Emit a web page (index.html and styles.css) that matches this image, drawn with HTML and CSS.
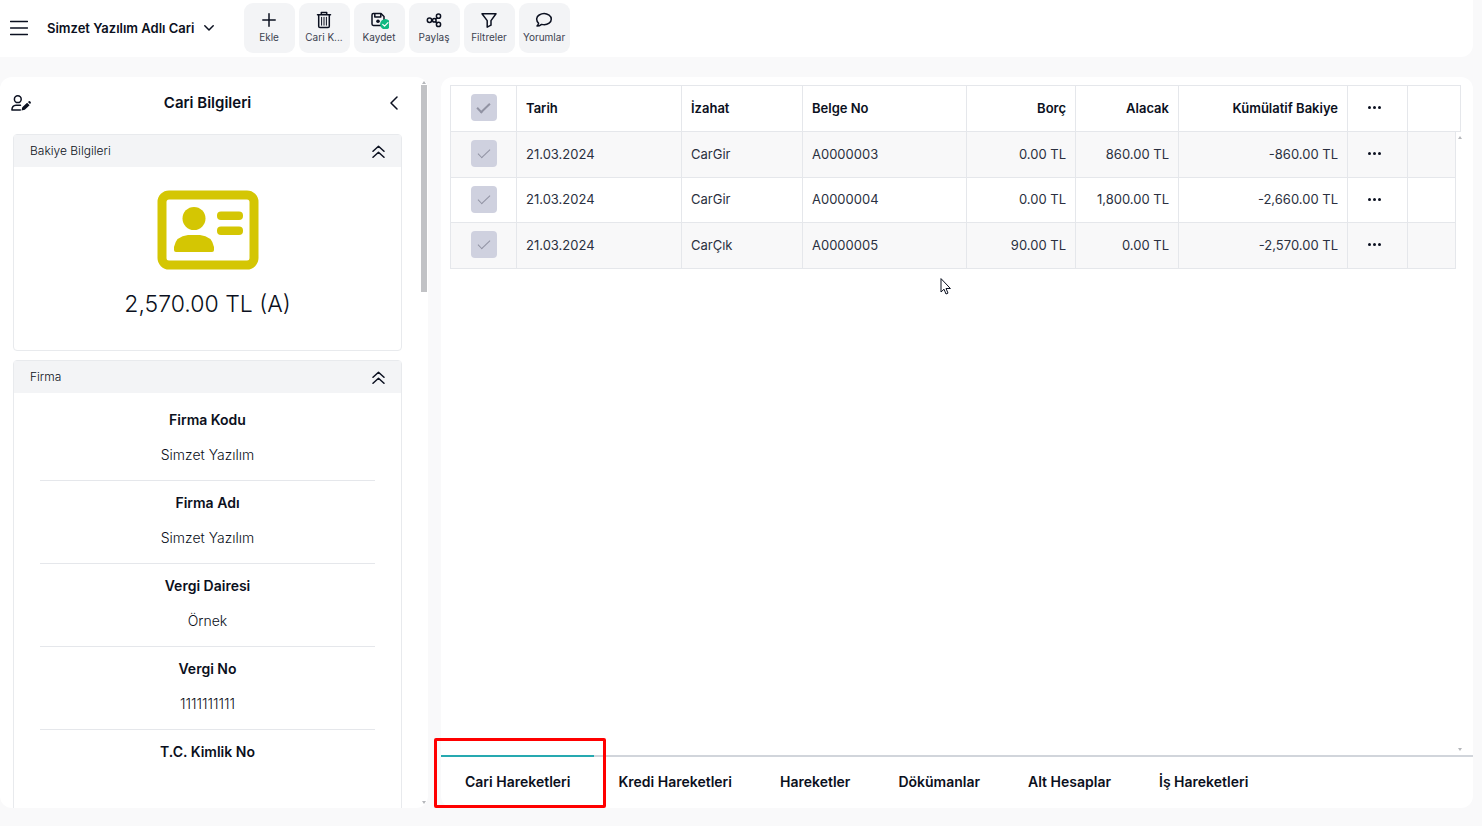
FILE: index.html
```html
<!DOCTYPE html>
<html lang="tr">
<head>
  <meta charset="UTF-8">
  <meta name="viewport" content="width=device-width, initial-scale=1.0">
  <title>Cari Hareketleri</title>
  <link rel="stylesheet" href="styles.css">
</head>
<body>

<header class="topbar">
  <button class="icon-btn menu-btn" aria-label="Menü">
    <svg width="18" height="16" viewBox="0 0 18 16"><path d="M0.5 1.5h17M0.5 8h17M0.5 14.5h17"/></svg>
  </button>
  <button class="title-btn">
    Simzet Yazılım Adlı Cari
    <svg width="10" height="6" viewBox="0 0 10 6"><path d="M0.8 0.8L5 5l4.2-4.2"/></svg>
  </button>

  <nav class="toolbar">
    <button class="tool">
      <svg width="18" height="18" viewBox="0 0 18 18"><path d="M9 2.8v12.4M2.8 9h12.4"/></svg>
      <span>Ekle</span>
    </button>
    <button class="tool">
      <svg width="18" height="18" viewBox="0 0 18 18"><path d="M2.500 3.700h13M6.300 3.500V1.500h5.400v2M3.700 4v11.200q0 1.300 1.300 1.300h8q1.300 0 1.300-1.300V4"/><path class="thin" d="M6.600 6.300v7.900M9 6.300v7.900M11.400 6.300v7.900"/></svg>
      <span>Cari K...</span>
    </button>
    <button class="tool">
      <svg width="20" height="18" viewBox="0 0 20 18"><path d="M12 14.500H4.400Q3 14.500 3 13.100V3.900Q3 2.500 4.400 2.500h7.600l3 3v4"/><path d="M5.800 2.700v3.200h6V2.700"/><circle class="fill" cx="9" cy="10.200" r="1.800"/><circle class="badge" cx="16.300" cy="13.300" r="5.200"/><path class="badge-tick" d="M13.700 13.300l1.900 1.900 3.400-3.500"/></svg>
      <span>Kaydet</span>
    </button>
    <button class="tool">
      <svg width="18" height="18" viewBox="0 0 18 18"><circle cx="4.500" cy="9.300" r="2.200"/><circle cx="9.300" cy="9.300" r="1.800"/><circle cx="13.500" cy="5.200" r="2.100"/><circle cx="13.500" cy="13.400" r="2.100"/><path d="M10.600 8l1.300-1.300M10.600 10.600l1.300 1.300"/></svg>
      <span>Paylaş</span>
    </button>
    <button class="tool">
      <svg width="18" height="18" viewBox="0 0 18 18"><path d="M2 2.800h14L11 9.600v4.600l-3.800 2V9.600z"/></svg>
      <span>Filtreler</span>
    </button>
    <button class="tool">
      <svg width="18" height="18" viewBox="0 0 18 18"><path d="M3.600 12.300C0.600 9.200 1.400 5.700 4.200 4c3-1.800 7.200-1.700 9.900.2 2.900 2.100 2.900 5.800 0 8-2 1.500-5 2-7.500 1.200-1.300 1-2.700 1.700-4.600 1.700.9-.9 1.500-1.800 1.600-2.800z"/></svg>
      <span>Yorumlar</span>
    </button>
  </nav>
</header>

<div class="layout">

  <aside class="sidebar">
    <div class="side-content">
      <div class="side-head">
        <button class="icon-btn" aria-label="Düzenle">
          <svg width="20" height="16" viewBox="0 0 20 16"><circle cx="6.800" cy="4.200" r="3.400"/><path d="M9.500 10.300H5Q1 10.600 0.900 15H9.300"/><path class="fill" d="M10.500 15.500l.8-3.300 4.800-4.500 2.500 2.500-4.800 4.500zM16.900 7l1-.8q.8-.4 1.400.2l.4.500q.500.800-.2 1.500l-.5.600z"/></svg>
        </button>
        <h2>Cari Bilgileri</h2>
        <button class="icon-btn" aria-label="Kapat">
          <svg width="8" height="14" viewBox="0 0 8 14"><path d="M7 1L1 7l6 6"/></svg>
        </button>
      </div>

      <section class="card">
        <div class="card-head">
          <h3>Bakiye Bilgileri</h3>
          <button class="icon-btn" aria-label="Daralt">
            <svg width="13" height="13" viewBox="0 0 13 13"><path d="M1 6.300l5.500-5 5.500 5M1 12.200l5.500-5 5.500 5"/></svg>
          </button>
        </div>
        <div class="balance">
          <svg width="102" height="80" viewBox="0 0 102 80">
            <rect class="frame" x="5" y="5" width="92" height="70" rx="7"/>
            <circle cx="37" cy="28.500" r="11.500"/>
            <path d="M17 60V57Q19 46 31 45h12q12 1 14 12v3q0 2-2 2H19q-2 0-2-2z"/>
            <rect x="60" y="21.500" width="26" height="8.500" rx="4"/>
            <rect x="60" y="36.500" width="26" height="8.500" rx="4"/>
          </svg>
          <p>2,570.00 TL (A)</p>
        </div>
      </section>

      <section class="card">
        <div class="card-head">
          <h3>Firma</h3>
          <button class="icon-btn" aria-label="Daralt">
            <svg width="13" height="13" viewBox="0 0 13 13"><path d="M1 6.300l5.500-5 5.500 5M1 12.200l5.500-5 5.500 5"/></svg>
          </button>
        </div>
        <dl class="fields">
          <div><dt>Firma Kodu</dt><dd>Simzet Yazılım</dd></div>
          <div><dt>Firma Adı</dt><dd>Simzet Yazılım</dd></div>
          <div><dt>Vergi Dairesi</dt><dd>Örnek</dd></div>
          <div><dt>Vergi No</dt><dd>1111111111</dd></div>
          <div><dt>T.C. Kimlik No</dt><dd></dd></div>
        </dl>
      </section>
    </div>

    <div class="scrollbar">
      <span class="arrow-up"></span>
      <span class="thumb"></span>
      <span class="arrow-down"></span>
    </div>
  </aside>

  <main class="panel">
    <div class="grid-area">
      <table class="grid">
        <colgroup>
          <col class="c-check"><col class="c-date"><col class="c-desc"><col class="c-doc"><col class="c-debit"><col class="c-credit"><col class="c-total"><col class="c-more"><col>
        </colgroup>
        <thead>
          <tr>
            <th><input type="checkbox" aria-label="Tümünü seç"></th>
            <th>Tarih</th>
            <th>İzahat</th>
            <th>Belge No</th>
            <th class="num">Borç</th>
            <th class="num">Alacak</th>
            <th class="num">Kümülatif Bakiye</th>
            <th><button class="more" aria-label="Seçenekler"><i></i><i></i><i></i></button></th>
            <th></th>
          </tr>
        </thead>
      </table>

      <div class="grid-scroll">
        <table class="grid">
          <colgroup>
            <col class="c-check"><col class="c-date"><col class="c-desc"><col class="c-doc"><col class="c-debit"><col class="c-credit"><col class="c-total"><col class="c-more"><col>
          </colgroup>
          <tbody>
            <tr>
              <td><input type="checkbox" aria-label="A0000003"></td>
              <td>21.03.2024</td>
              <td>CarGir</td>
              <td>A0000003</td>
              <td class="num">0.00 TL</td>
              <td class="num">860.00 TL</td>
              <td class="num">-860.00 TL</td>
              <td><button class="more" aria-label="Seçenekler"><i></i><i></i><i></i></button></td>
              <td></td>
            </tr>
            <tr>
              <td><input type="checkbox" aria-label="A0000004"></td>
              <td>21.03.2024</td>
              <td>CarGir</td>
              <td>A0000004</td>
              <td class="num">0.00 TL</td>
              <td class="num">1,800.00 TL</td>
              <td class="num">-2,660.00 TL</td>
              <td><button class="more" aria-label="Seçenekler"><i></i><i></i><i></i></button></td>
              <td></td>
            </tr>
            <tr>
              <td><input type="checkbox" aria-label="A0000005"></td>
              <td>21.03.2024</td>
              <td>CarÇık</td>
              <td>A0000005</td>
              <td class="num">90.00 TL</td>
              <td class="num">0.00 TL</td>
              <td class="num">-2,570.00 TL</td>
              <td><button class="more" aria-label="Seçenekler"><i></i><i></i><i></i></button></td>
              <td></td>
            </tr>
          </tbody>
        </table>
        <div class="scrollbar">
          <span class="arrow-up"></span>
          <span class="arrow-down"></span>
        </div>
      </div>
    </div>

    <nav class="tabs">
      <button class="tab active">Cari Hareketleri</button>
      <button class="tab">Kredi Hareketleri</button>
      <button class="tab">Hareketler</button>
      <button class="tab">Dökümanlar</button>
      <button class="tab">Alt Hesaplar</button>
      <button class="tab">İş Hareketleri</button>
    </nav>

    <svg class="pointer" width="12" height="18" viewBox="0 0 12 18"><path d="M1 1v13l3-2.800 2 4.800 2-.9-2-4.600h4z"/></svg>
  </main>

</div>

</body>
</html>
```
FILE: styles.css
```css
* {
  box-sizing: border-box;
}
body {
  margin: 0;
  height: 100vh;
  display: flex;
  flex-direction: column;
  gap: 20px;
  padding: 0 9px 18px 0;
  font-family: Inter, "Liberation Sans", sans-serif;
  font-size: 14px;
  line-height: 20px;
  color: #0b1020;
  background: #f9f9fa;
  overflow: hidden;
}
button {
  padding: 0;
  border: none;
  background: none;
  font: inherit;
  color: inherit;
  cursor: pointer;
}
h2, h3, p, dl, dd {
  margin: 0;
}
svg {
  display: block;
  flex: none;
  fill: none;
  stroke: #0b1020;
  stroke-width: 1.5;
  stroke-linecap: round;
  stroke-linejoin: round;
}
.fill {
  fill: #0b1020;
  stroke: none;
}
.icon-btn {
  display: flex;
  justify-content: center;
  width: 20px;
}

/* top bar */
.topbar {
  display: flex;
  align-items: center;
  height: 57px;
  flex: none;
  padding: 0 0 1px 9px;
  background: #fff;
  border-radius: 0 0 12px 0;
}
.title-btn {
  display: flex;
  align-items: center;
  gap: 9px;
  margin-left: 18px;
  font-size: 13px;
  font-weight: 600;
}
.toolbar {
  display: flex;
  gap: 4px;
  margin-left: 30px;
}
.tool {
  display: flex;
  flex-direction: column;
  align-items: center;
  width: 51px;
  height: 50px;
  padding-top: 8px;
  border-radius: 9px;
  background: #f3f4f6;
  font-size: 10px;
  line-height: 16px;
  color: #3c4250;
}
.thin {
  stroke-width: 1;
}
.badge {
  fill: #10b981;
  stroke: none;
}
.badge-tick {
  stroke: #fff;
  stroke-width: 1.2;
}

/* page body */
.layout {
  display: grid;
  grid-template-columns: 428px minmax(0, 1fr);
  gap: 13px;
  flex: 1;
  min-height: 0;
}
.sidebar, .panel {
  display: flex;
  min-height: 0;
  background: #fff;
  border-radius: 12px;
}
.sidebar {
  overflow: hidden;
}
.side-content {
  flex: 1;
  padding: 0 18px 0 13px;
}
.side-head {
  display: flex;
  align-items: center;
  justify-content: space-between;
  height: 51px;
  margin: 0 -2px 6px;
}
.side-head h2 {
  font-size: 15px;
  font-weight: 600;
}
.card {
  margin-bottom: 9px;
  border: 1px solid #e8eaed;
  border-radius: 4px;
}
.card-head {
  display: flex;
  align-items: center;
  justify-content: space-between;
  height: 32px;
  padding: 0 13px 0 16px;
  background: #f3f4f6;
}
.card-head h3 {
  font-size: 12px;
  font-weight: 300;
}
.balance {
  display: flex;
  flex-direction: column;
  align-items: center;
  gap: 18px;
  padding: 23px 0 30px;
}
.balance svg {
  fill: #d4c603;
  stroke: none;
}
.balance .frame {
  fill: none;
  stroke: #d4c603;
  stroke-width: 9;
}
.balance p {
  font-size: 23px;
  font-weight: 300;
  line-height: 32px;
}
.fields {
  padding: 5px 26px;
}
.fields div {
  height: 83px;
  padding-top: 12px;
  border-bottom: 1px solid #e5e7eb;
  text-align: center;
}
.fields dt {
  margin-bottom: 15px;
  font-weight: 600;
}
.fields dd {
  font-weight: 300;
}

/* scrollbars */
.scrollbar {
  display: flex;
  flex-direction: column;
  align-items: center;
  width: 9px;
  padding: 4px 1px 4px 0;
}
.thumb {
  width: 6px;
  height: 207px;
  margin-top: 1px;
  background: #c1c2c5;
}
.sidebar .scrollbar {
  width: 8px;
}
.arrow-up, .arrow-down {
  border: 2px solid transparent;
}
.arrow-up {
  border-top: none;
  border-bottom: 3px solid #b5b7bb;
}
.arrow-down {
  margin-top: auto;
  border-bottom: none;
  border-top: 3px solid #b5b7bb;
}

/* movements */
.panel {
  position: relative;
  flex-direction: column;
}
.grid-area {
  display: flex;
  flex-direction: column;
  flex: 1;
  min-height: 0;
  padding: 8px 8px 0 9px;
}
.grid-area > .grid {
  width: calc(100% - 4px);
}
.grid-scroll {
  display: flex;
  align-items: flex-start;
  flex: 1;
}
.grid-scroll .scrollbar {
  align-self: stretch;
}
.grid {
  width: 100%;
  table-layout: fixed;
  border-collapse: separate;
  border-spacing: 0;
  border-left: 1px solid #e5e7eb;
}
.c-check { width: 66px; }
.c-date { width: 165px; }
.c-desc { width: 121px; }
.c-doc { width: 164px; }
.c-debit { width: 109px; }
.c-credit { width: 103px; }
.c-total { width: 169px; }
.c-more { width: 60px; }
.grid th, .grid td {
  padding: 0 9px 2px;
  border-right: 1px solid #e5e7eb;
  border-bottom: 1px solid #e5e7eb;
  text-align: left;
  white-space: nowrap;
  font-size: 13px;
}
.grid th {
  height: 47px;
  border-top: 1px solid #e5e7eb;
  font-weight: 600;
}
.grid td {
  height: 45px;
  color: #2a3040;
}
.grid tbody tr:nth-child(odd) td {
  height: 46px;
  background: #f8f8f9;
}
.grid .num {
  text-align: right;
}
.grid input {
  appearance: none;
  display: flex;
  justify-content: center;
  width: 26px;
  height: 27px;
  margin: 0 auto;
  border-radius: 4px;
  background: #cfd1df;
}
.grid input::before {
  content: "";
  width: 5px;
  height: 11px;
  margin-top: 6px;
  border: solid #9193a3;
  border-width: 0 1px 1px 0;
  transform: rotate(46deg);
}
.grid th input::before {
  border-width: 0 2px 2px 0;
}
.more {
  display: flex;
  gap: 2px;
  margin: 0 11px;
}
.more i {
  width: 3px;
  height: 3px;
  border-radius: 50%;
  background: #0b1020;
}

/* tabs */
.tabs {
  display: flex;
  height: 53px;
  border-top: 2px solid #d1d5db;
}
.tab {
  position: relative;
  margin-top: -2px;
  padding: 0 24px 2px;
  border-top: 2px solid transparent;
  font-weight: 600;
}
.tab.active {
  border-top-color: #26a9b0;
}
.tab.active::after {
  content: "";
  position: absolute;
  top: -19px;
  right: -12px;
  bottom: 0;
  left: -7px;
  border: 3px solid #f00;
  border-radius: 2px;
}
.pointer {
  position: absolute;
  top: 201px;
  left: 499px;
  fill: #fff;
  stroke-width: 1;
}
```
